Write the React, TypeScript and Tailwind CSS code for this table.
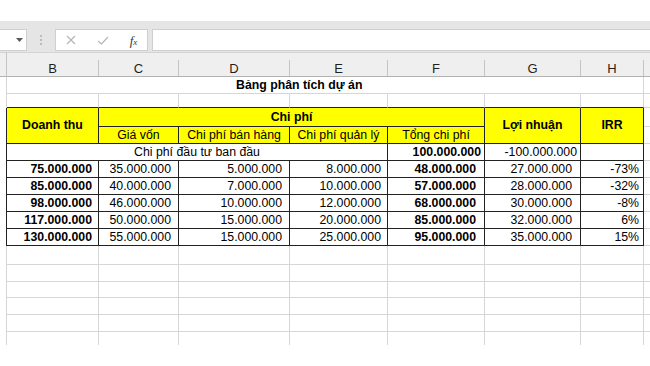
import { Fragment } from "react";

const letters = ["B", "C", "D", "E", "F", "G", "H"];

const data = [
  ["75.000.000", "35.000.000", "5.000.000", "8.000.000", "48.000.000", "27.000.000", "-73%"],
  ["85.000.000", "40.000.000", "7.000.000", "10.000.000", "57.000.000", "28.000.000", "-32%"],
  ["98.000.000", "46.000.000", "10.000.000", "12.000.000", "68.000.000", "30.000.000", "-8%"],
  ["117.000.000", "50.000.000", "15.000.000", "20.000.000", "85.000.000", "32.000.000", "6%"],
  ["130.000.000", "55.000.000", "15.000.000", "25.000.000", "95.000.000", "35.000.000", "15%"],
];

const pads = ["pr-[6px]", "pr-[7px]", "pr-[7px]", "pr-[6px]", "pr-[8px]", "pr-[8px]", "pr-[4px]"];

// cell border presets
const gray = "border-r border-b border-[#d6d6d6]";
const black = "border-r border-b border-[#222]";
const aboveTable = "border-r border-b border-r-[#d6d6d6] border-b-[#222]";
const stripGray = "border-r border-[#d6d6d6]";
const stripBlack = "border-r border-[#222]";
const iCell = "border-b border-[#d6d6d6]";
const yellow = "bg-[#ffff00]";

const Toolbar = () => (
  <div className="h-[31px] bg-[#e5e5e5] flex items-start pt-[8px]">
    <div className="w-[27px] h-[22px] bg-white border border-l-0 border-[#cfcfcf] flex items-center justify-end pr-[3px]">
      <svg width="7" height="4" viewBox="0 0 7 4">
        <path d="M0 0h7L3.5 4z" fill="#5a5a5a" />
      </svg>
    </div>
    <div className="w-[28px] h-[22px] flex items-center justify-center">
      <svg width="2" height="10" viewBox="0 0 2 10">
        <circle cx="1" cy="1" r="0.9" fill="#a8a8a8" />
        <circle cx="1" cy="5" r="0.9" fill="#a8a8a8" />
        <circle cx="1" cy="9" r="0.9" fill="#a8a8a8" />
      </svg>
    </div>
    <div className="w-[93px] h-[22px] bg-white border border-[#cfcfcf] flex items-center">
      <span className="w-[30px] flex justify-center">
        <svg width="10" height="10" viewBox="0 0 10 10">
          <path d="M1 1l8 8M9 1l-8 8" stroke="#b5b5b5" strokeWidth="1.2" fill="none" />
        </svg>
      </span>
      <span className="w-[34px] flex justify-center">
        <svg width="12" height="9" viewBox="0 0 12 9">
          <path d="M1 5l3.5 3L11 1" stroke="#b5b5b5" strokeWidth="1.2" fill="none" />
        </svg>
      </span>
      <span className="w-[27px] flex justify-center items-end font-['Liberation_Serif',serif] italic text-[#3a3a3a] leading-none">
        <span className="text-[13px]">f</span>
        <span className="text-[9px]">x</span>
      </span>
    </div>
    <div className="ml-[4px] flex-1 h-[22px] bg-white border border-r-0 border-[#cfcfcf]" />
  </div>
);

const Sheet = () => (
  <div className="grid grid-cols-[7px_92px_80px_111px_98px_97px_96px_63px_6px] grid-rows-[25px_17px_14px_19px_17px_17px_17px_17px_17px_17px_17px_19px_17px_16px_17px_17px_13px] text-[12.3px] leading-none">
    {/* column headers */}
    <div className="bg-[#efefef] border-t border-b border-r border-t-[#d4d4d4] border-b-[#b2b2b2] border-r-[#c4c4c4]" />
    {letters.map((l) => (
      <div key={l} className="bg-[#efefef] border-t border-b border-t-[#d4d4d4] border-b-[#b2b2b2] flex items-end">
        <div className="h-[16px] w-full border-r border-[#c4c4c4] flex items-center justify-center text-[13px] text-[#1f1f1f]">
          {l}
        </div>
      </div>
    ))}
    <div className="bg-[#efefef] border-t border-b border-t-[#d4d4d4] border-b-[#b2b2b2]" />

    {/* title row */}
    <div className={stripGray} />
    <div className={`col-span-7 ${gray} flex items-center pl-[229px] font-bold`}>Bảng phân tích dự án</div>
    <div className={iCell} />

    {/* empty row above table */}
    <div className={stripGray} />
    {letters.map((l) => (
      <div key={l} className={aboveTable} />
    ))}
    <div className={iCell} />

    {/* header row 1 */}
    <div className={stripBlack} />
    <div className={`row-span-2 ${black} ${yellow} flex items-center justify-center font-bold`}>Doanh thu</div>
    <div className={`col-span-4 ${black} ${yellow} flex items-center justify-center font-bold`}>Chi phí</div>
    <div className={`row-span-2 ${black} ${yellow} flex items-center justify-center font-bold`}>Lợi nhuận</div>
    <div className={`row-span-2 ${black} ${yellow} flex items-center justify-center font-bold`}>IRR</div>
    <div className={iCell} />

    {/* header row 2 */}
    <div className={stripBlack} />
    {["Giá vốn", "Chi phí bán hàng", "Chi phí quản lý", "Tổng chi phí"].map((t) => (
      <div key={t} className={`${black} ${yellow} flex items-center justify-center`}>
        {t}
      </div>
    ))}
    <div className={iCell} />

    {/* initial investment */}
    <div className={stripBlack} />
    <div className={`col-span-4 ${black} flex items-center justify-center`}>Chi phí đầu tư ban đầu</div>
    <div className={`${black} flex items-center justify-end pr-[3px] font-bold`}>100.000.000</div>
    <div className={`${black} flex items-center justify-end pr-[3px]`}>-100.000.000</div>
    <div className={black} />
    <div className={iCell} />

    {/* data rows */}
    {data.map((r, i) => (
      <Fragment key={i}>
        <div className={stripBlack} />
        {r.map((v, j) => (
          <div
            key={j}
            className={`${black} flex items-center justify-end ${pads[j]} ${j === 0 || j === 4 ? "font-bold" : ""}`}
          >
            {v}
          </div>
        ))}
        <div className={iCell} />
      </Fragment>
    ))}

    {/* empty rows below */}
    {[0, 1, 2, 3, 4].map((i) => (
      <Fragment key={`e${i}`}>
        <div className={stripGray} />
        {letters.map((l) => (
          <div key={l} className={gray} />
        ))}
        <div className={iCell} />
      </Fragment>
    ))}
    <div className={stripGray} />
    {letters.map((l) => (
      <div key={l} className="border-r border-[#d6d6d6]" />
    ))}
    <div />
  </div>
);

export default function App() {
  return (
    <div className="w-[650px] h-[366px] bg-white overflow-hidden font-['Liberation_Sans',Arial,sans-serif] text-black">
      <div className="h-[21px]" />
      <Toolbar />
      <Sheet />
    </div>
  );
}
